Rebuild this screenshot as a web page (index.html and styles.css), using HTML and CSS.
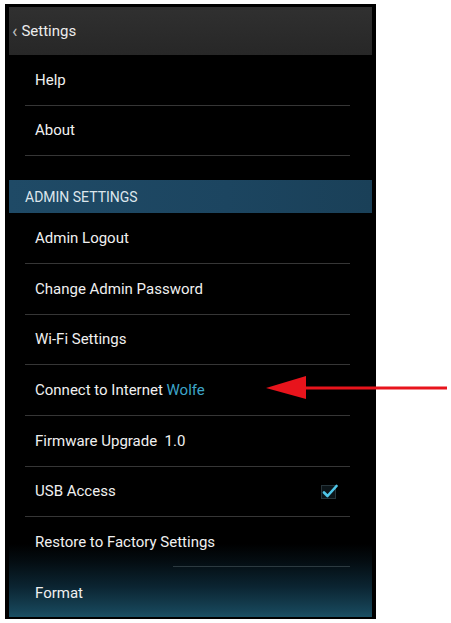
FILE: index.html
```html
<!DOCTYPE html>
<html>
<head>
<meta charset="utf-8">
<link rel="stylesheet" href="styles.css">
</head>
<body>
<div class="phone">
  <div class="screen">
    <div class="appbar"><span class="chev">&#8249;</span><span class="title">Settings</span></div>
    <ul class="list">
      <li class="row">Help</li>
      <li class="row">About</li>
    </ul>
    <div class="section">ADMIN SETTINGS</div>
    <ul class="list">
      <li class="row">Admin Logout</li>
      <li class="row">Change Admin Password</li>
      <li class="row">Wi-Fi Settings</li>
      <li class="row"><span>Connect to Internet&nbsp;<span class="accent">Wolfe</span></span></li>
      <li class="row">Firmware Upgrade&nbsp; 1.0</li>
      <li class="row"><span>USB Access</span><span class="check"><svg width="17" height="17" viewBox="0 0 17 17"><rect x="0.5" y="2.5" width="14" height="13" fill="#0b1418" stroke="#26343a" stroke-width="1"/><path d="M3 9.5 L6.5 13 L15.5 3" fill="none" stroke="#4fc6e8" stroke-width="2.6" stroke-linecap="round" stroke-linejoin="round"/></svg></span></li>
      <li class="row partial">Restore to Factory Settings</li>
      <li class="row last">Format</li>
    </ul>
  </div>
</div>
<svg class="arrow" width="186" height="28" viewBox="0 0 186 28">
  <polygon points="2,14 42,2 42,25" fill="#e8141c"/>
  <rect x="40" y="12.5" width="143" height="3" fill="#e8141c"/>
</svg>
</body>
</html>
```
FILE: styles.css
```css
html, body {
  margin: 0;
  background: #fff;
}
body {
  padding: 4px 0 0 5px;
  position: relative;
  height: 619px;
  box-sizing: border-box;
  font-family: Roboto, "Noto Sans", "Liberation Sans", sans-serif;
}
.phone {
  width: 371px;
  height: 615px;
  box-sizing: border-box;
  background: #000;
  padding: 3px 4px 2px 4px;
}
.screen {
  height: 100%;
  background: linear-gradient(to bottom, #000 0%, #000 88%, #040d12 91%, #0b2431 95%, #164457 99%, #1a5064 100%);
  display: flex;
  flex-direction: column;
  overflow: hidden;
}
.appbar {
  height: 48px;
  flex: none;
  background: linear-gradient(to bottom, #303030, #272727);
  display: flex;
  align-items: center;
  color: #ececec;
  font-size: 15px;
  padding-left: 3px;
}
.chev {
  font-size: 18px;
  color: #bdbdbd;
  margin-right: 4px;
  position: relative;
  top: -1px;
}
.list {
  list-style: none;
  margin: 0;
  padding: 0;
}
.row {
  height: 49.67px;
  display: flex;
  align-items: center;
  margin: 0 22px 0 16px;
  padding-left: 10px;
  border-bottom: 1px solid #363636;
  color: #f0f0f0;
  font-size: 15px;
  white-space: nowrap;
}
.row.partial {
  border-bottom-color: transparent;
  background: linear-gradient(to right, transparent 148px, #2c3a40 148px) bottom / 100% 1px no-repeat;
}
.row.last {
  border-bottom: none;
}
.accent {
  color: #3da5c9;
}
.check {
  margin-left: auto;
  margin-right: 12px;
  display: flex;
}
.section {
  margin-top: 24px;
  height: 33px;
  flex: none;
  background: linear-gradient(to right, #1f4a66, #1c4560 60%, #1a4058);
  color: #dde6ec;
  font-size: 14px;
  display: flex;
  align-items: center;
  padding-left: 16px;
}
.arrow {
  position: absolute;
  left: 264px;
  top: 374px;
}
```
